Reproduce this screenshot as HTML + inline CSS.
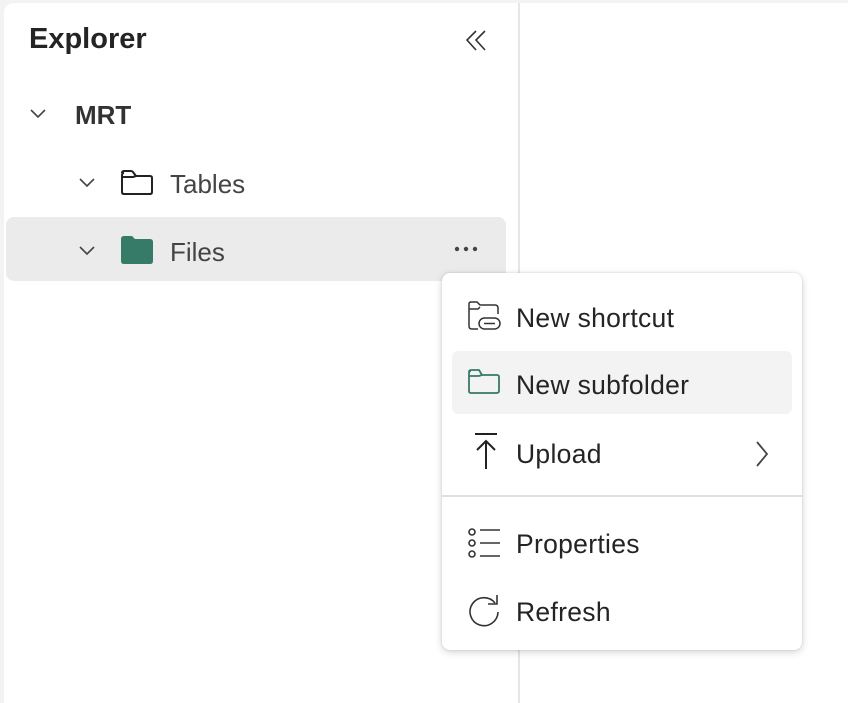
<!DOCTYPE html>
<html><head><style>
body{margin:0;width:848px;height:684px;background:#f3f3f3;position:relative;overflow:hidden;font-family:"Liberation Sans",sans-serif;color:#242424}
.panel{position:absolute;left:4px;top:3px;width:514px;height:700px;background:#fff;border-radius:10px 0 0 0;border-right:2px solid #e6e6e6}
.main{position:absolute;left:520px;top:3px;width:340px;height:700px;background:#fff}
.t{position:absolute;white-space:nowrap;line-height:1}
svg{position:absolute;overflow:visible}
.menu{position:absolute;left:442px;top:273px;width:360px;height:377px;background:#fff;border-radius:8px;box-shadow:0 2px 8px rgba(0,0,0,.18),0 0 2px rgba(0,0,0,.12)}
.mi{font-size:26.5px;color:#242424;letter-spacing:0.3px}
</style></head><body>
<div class="panel"></div>
<div class="main"></div>
<div class="t" style="left:29px;top:25px;font-size:29px;font-weight:bold">Explorer</div>
<svg style="left:464px;top:29px" width="24" height="24" fill="none" stroke="#333" stroke-width="1.6"><path d="M12 2 L3 11 L12 21 M21 2 L12 11 L21 21"/></svg>
<svg style="left:30px;top:109px" width="16" height="10" fill="none" stroke="#444" stroke-width="1.6"><path d="M1 1 L8 8 L15 1"/></svg>
<div class="t" style="left:75px;top:102px;font-size:26px;font-weight:bold;color:#333">MRT</div>
<svg style="left:79px;top:178px" width="16" height="10" fill="none" stroke="#444" stroke-width="1.6"><path d="M1 1 L8 8 L15 1"/></svg>
<svg style="left:121px;top:169px" width="32" height="27" fill="none" stroke="#222" stroke-width="2"><path d="M3 4 Q1 4 1 6 V23 Q1 25 3 25 H29 Q31 25 31 23 V9 Q31 7 29 7 H15 L12 3 Q11 2 10 2 H3 Q1 2 1 4 M1 8 H12 L15 7"/></svg>
<div class="t" style="left:170px;top:171px;font-size:26px;color:#444">Tables</div>
<div style="position:absolute;left:6px;top:217px;width:500px;height:64px;background:#ebebeb;border-radius:8px"></div>
<svg style="left:79px;top:246px" width="16" height="10" fill="none" stroke="#444" stroke-width="1.6"><path d="M1 1 L8 8 L15 1"/></svg>
<svg style="left:121px;top:236px" width="32" height="28"><path d="M3 0 H11 L14 3 H29 Q32 3 32 6 V25 Q32 28 29 28 H3 Q0 28 0 25 V3 Q0 0 3 0Z" fill="#367a68"/></svg>
<div class="t" style="left:170px;top:239px;font-size:26px;color:#444">Files</div>
<svg style="left:454px;top:246px" width="26" height="6" fill="#444"><circle cx="3" cy="3" r="2.2"/><circle cx="12" cy="3" r="2.2"/><circle cx="21" cy="3" r="2.2"/></svg>
<div class="menu">
<div style="position:absolute;left:10px;top:78px;width:340px;height:63px;background:#f3f3f3;border-radius:6px"></div>
<div style="position:absolute;left:0;top:222px;width:360px;height:2px;background:#e0e0e0"></div>
</div>
<svg style="left:468px;top:301px" width="34" height="32" fill="none" stroke="#333" stroke-width="1.5"><path d="M10 28 H4 Q1 28 1 25 V3 Q1 1 3 1 H9 L12 4 H27 Q30 4 30 7 V13 M1 8 H10 L12 6"/><rect x="11" y="17" width="21" height="11" rx="5.5"/><path d="M16 22.5 H27"/></svg>
<div class="t mi" style="left:516px;top:305px">New shortcut</div>
<svg style="left:468px;top:368px" width="32" height="27" fill="none" stroke="#367a68" stroke-width="1.8"><path d="M3 3 Q1 3 1 5 V23 Q1 25 3 25 H28 Q31 25 31 23 V9 Q31 7 29 7 H14 L11 2 H3 Q1 2 1 4 M1 8 H11 L14 7"/></svg>
<div class="t mi" style="left:516px;top:372px">New subfolder</div>
<svg style="left:474px;top:433px" width="24" height="36" fill="none" stroke="#222" stroke-width="2"><path d="M1 1 H23 M12 36 V8 M3 17 L12 8 L21 17"/></svg>
<div class="t mi" style="left:516px;top:441px">Upload</div>
<svg style="left:755px;top:441px" width="14" height="26" fill="none" stroke="#444" stroke-width="1.8"><path d="M2 1 L12 13 L2 25"/></svg>
<svg style="left:468px;top:528px" width="34" height="30" fill="none" stroke="#333" stroke-width="1.6"><circle cx="4" cy="4" r="3"/><circle cx="4" cy="15" r="3"/><circle cx="4" cy="26" r="3"/><path d="M12 2 H32 M12 15 H32 M12 28 H32"/></svg>
<div class="t mi" style="left:516px;top:531px">Properties</div>
<svg style="left:468px;top:594px" width="32" height="32" fill="none" stroke="#333" stroke-width="1.6"><path d="M27 9 A14 14 0 1 0 30 18 M29 1 V10 H20"/></svg>
<div class="t mi" style="left:516px;top:599px">Refresh</div>
</body></html>
